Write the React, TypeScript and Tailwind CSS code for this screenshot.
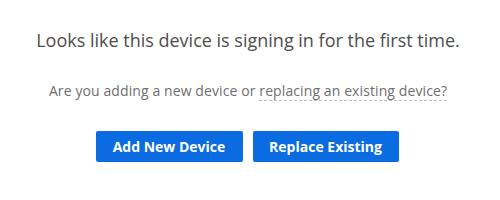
import React from 'react';

export default function App() {
  return (
    <div className="w-[500px] h-[200px] bg-white flex flex-col items-center pr-[4px] font-['Open_Sans',sans-serif]">
      <h1 className="mt-[29px] text-[18px] leading-[22px] text-[#4d4d4d] whitespace-nowrap">
        Looks like this device is signing in for the first time.
      </h1>
      <p className="mt-[31px] text-[14px] leading-[18px] text-[#6e6e6e] whitespace-nowrap tracking-[0.1px]">
        Are you adding a new device or{' '}
        <span className="border-b border-dashed border-[#bdbdbd]">replacing an existing device?</span>
      </p>
      <div className="mt-[31px] mr-[2px] flex gap-[10px]">
        <button
          type="button"
          className="w-[147px] h-[31px] bg-[#0b6be0] text-white text-[14px] font-bold rounded-[2px]"
        >
          Add New Device
        </button>
        <button
          type="button"
          className="w-[146px] h-[31px] bg-[#0b6be0] text-white text-[14px] font-bold rounded-[2px]"
        >
          Replace Existing
        </button>
      </div>
    </div>
  );
}
